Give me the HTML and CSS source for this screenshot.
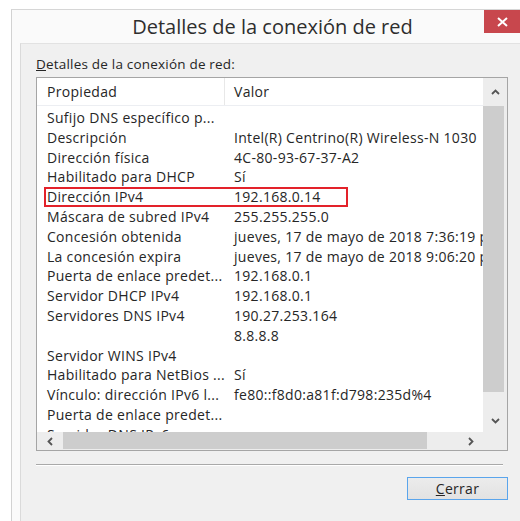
FILE: index.html
```html
<!DOCTYPE html>
<html lang="es">
<head>
<meta charset="utf-8">
<title>Detalles de la conexión de red</title>
<link rel="stylesheet" href="styles.css">
</head>
<body>
<div class="window">
  <div class="titlebar">
    <span class="title">Detalles de la conexión de red</span>
    <div class="close" aria-label="Cerrar">
      <svg width="11" height="10" viewBox="0 0 11 10"><path d="M1 1 L10 9 M10 1 L1 9" stroke="#fff" stroke-width="2" fill="none"/></svg>
    </div>
  </div>
  <div class="client">
    <div class="group-label"><u>D</u>etalles de la conexión de red:</div>
    <div class="listview">
      <div class="list-area">
        <div class="header">
          <div class="c1 hcol">Propiedad</div>
          <div class="c2 hcol">Valor</div>
        </div>
        <div class="rows">
          <div class="row"><span class="c1">Sufijo DNS específico p...</span><span class="c2"></span></div>
          <div class="row"><span class="c1">Descripción</span><span class="c2">Intel(R) Centrino(R) Wireless-N 1030</span></div>
          <div class="row"><span class="c1">Dirección física</span><span class="c2">4C-80-93-67-37-A2</span></div>
          <div class="row"><span class="c1">Habilitado para DHCP</span><span class="c2">Sí</span></div>
          <div class="row marked"><span class="c1">Dirección IPv4</span><span class="c2">192.168.0.14</span></div>
          <div class="row"><span class="c1">Máscara de subred IPv4</span><span class="c2">255.255.255.0</span></div>
          <div class="row"><span class="c1">Concesión obtenida</span><span class="c2">jueves, 17 de mayo de 2018 7:36:19 p. m.</span></div>
          <div class="row"><span class="c1">La concesión expira</span><span class="c2">jueves, 17 de mayo de 2018 9:06:20 p. m.</span></div>
          <div class="row"><span class="c1">Puerta de enlace predet...</span><span class="c2">192.168.0.1</span></div>
          <div class="row"><span class="c1">Servidor DHCP IPv4</span><span class="c2">192.168.0.1</span></div>
          <div class="row"><span class="c1">Servidores DNS IPv4</span><span class="c2">190.27.253.164</span></div>
          <div class="row"><span class="c1"></span><span class="c2">8.8.8.8</span></div>
          <div class="row"><span class="c1">Servidor WINS IPv4</span><span class="c2"></span></div>
          <div class="row"><span class="c1">Habilitado para NetBios ...</span><span class="c2">Sí</span></div>
          <div class="row"><span class="c1">Vínculo: dirección IPv6 l...</span><span class="c2">fe80::f8d0:a81f:d798:235d%4</span></div>
          <div class="row"><span class="c1">Puerta de enlace predet...</span><span class="c2"></span></div>
          <div class="row"><span class="c1">Servidor DNS IPv6</span><span class="c2"></span></div>
        </div>
      </div>
      <div class="vscroll">
        <div class="sb-btn up">
          <svg width="9" height="6" viewBox="0 0 9 6"><path d="M1 5 L4.5 1.5 L8 5" stroke="#555" stroke-width="1.8" fill="none"/></svg>
        </div>
        <div class="vthumb"></div>
        <div class="sb-space"></div>
        <div class="sb-btn down">
          <svg width="9" height="6" viewBox="0 0 9 6"><path d="M1 1 L4.5 4.5 L8 1" stroke="#555" stroke-width="1.8" fill="none"/></svg>
        </div>
      </div>
      <div class="hscroll">
        <div class="sb-btn left">
          <svg width="6" height="9" viewBox="0 0 6 9"><path d="M5 1 L1.5 4.5 L5 8" stroke="#555" stroke-width="1.8" fill="none"/></svg>
        </div>
        <div class="hthumb"></div>
        <div class="sb-space"></div>
        <div class="sb-btn right">
          <svg width="6" height="9" viewBox="0 0 6 9"><path d="M1 1 L4.5 4.5 L1 8" stroke="#555" stroke-width="1.8" fill="none"/></svg>
        </div>
      </div>
      <div class="corner"></div>
    </div>
    <div class="separator"></div>
    <div class="buttons">
      <div class="btn"><u>C</u>errar</div>
    </div>
  </div>
</div>
</body>
</html>
```

FILE: styles.css
```css
html, body {
  margin: 0;
  padding: 0;
}

body {
  width: 520px;
  height: 521px;
  overflow: hidden;
  background: #ffffff;
  font-family: "Open Sans", "Noto Sans", "DejaVu Sans", sans-serif;
  color: #262626;
}

.window {
  margin: 9px 0 0 11px;
  width: 509px;
  height: 512px;
  border-left: 1px solid #d2d2d2;
  border-top: 1px solid #d6d6d6;
  background: #fafafa;
  display: flex;
  flex-direction: column;
}

/* caption */
.titlebar {
  height: 33px;
  display: grid;
  grid-template-columns: 1fr auto 1fr;
  align-items: start;
  padding-left: 12px;
}

.title {
  grid-column: 2;
  font-size: 20px;
  line-height: 34px;
  color: #2e2e2e;
  white-space: nowrap;
}

.close {
  grid-column: 3;
  justify-self: end;
  width: 37px;
  height: 23px;
  background: #c8474d;
  display: flex;
  align-items: center;
  justify-content: center;
}

/* dialog body */
.client {
  flex: 1;
  margin-left: 8px;
  border-left: 1px solid #dadada;
  border-top: 1px solid #e2e2e2;
  background: #f0f0f0;
  padding: 12px 0 0 15px;
  font-size: 14px;
  letter-spacing: 0.3px;
}

.group-label {
  line-height: 16px;
  height: 16px;
  margin-bottom: 5px;
  white-space: nowrap;
  font-size: 13.5px;
  letter-spacing: 0.2px;
}

.listview {
  width: 470px;
  height: 372px;
  border: 1px solid #a5a5a5;
  background: #ffffff;
  display: grid;
  grid-template-columns: 446px 24px;
  grid-template-rows: 354px 18px;
}

.list-area {
  overflow: hidden;
  position: relative;
}

.header {
  display: flex;
  height: 27px;
  border-bottom: 1px solid #eceef2;
}

.hcol {
  line-height: 28px;
}

.c1 {
  flex: 0 0 188px;
  width: 188px;
  box-sizing: border-box;
  padding-left: 10px;
  white-space: nowrap;
  overflow: hidden;
}

.header .c1 {
  border-right: 1px solid #e8e8e8;
}

.c2 {
  padding-left: 9px;
  white-space: nowrap;
}

.rows {
  padding-top: 2px;
}

.row {
  display: flex;
  height: 19.8px;
  line-height: 19.8px;
  position: relative;
  white-space: nowrap;
}

/* red annotation frame around the IPv4 address row */
.row.marked::after {
  content: "";
  position: absolute;
  left: 7px;
  top: 0;
  width: 304px;
  height: 100%;
  box-sizing: border-box;
  border: 2px solid #e3222a;
}

/* scrollbars */
.vscroll {
  background: #ededed;
  display: flex;
  flex-direction: column;
}

.sb-btn {
  display: flex;
  align-items: center;
  justify-content: center;
}

.vscroll .up {
  height: 27px;
  flex: 0 0 27px;
}

.vthumb {
  height: 286px;
  margin: 1px 3px 0 0;
  background: #cdcdcd;
}

.sb-space {
  flex: 1;
}

.vscroll .down {
  height: 22px;
  flex: 0 0 22px;
}

.hscroll {
  grid-column: 1;
  grid-row: 2;
  background: #ededed;
  display: flex;
}

.hscroll .left {
  width: 26px;
  flex: 0 0 26px;
}

.hthumb {
  width: 364px;
  margin-bottom: 1px;
  background: #cdcdcd;
}

.hscroll .right {
  width: 24px;
  flex: 0 0 24px;
}

.corner {
  background: #ededed;
}

.separator {
  width: 467px;
  margin-top: 13px;
  border-top: 1px solid #a9a9a9;
  border-bottom: 1px solid #ffffff;
}

.buttons {
  width: 472px;
  display: flex;
  justify-content: flex-end;
  margin-top: 11px;
}

.btn {
  width: 99px;
  height: 21px;
  line-height: 21px;
  text-align: center;
  border: 1px solid #5aa5ec;
  background: linear-gradient(#ececec, #e2e2e2);
  color: #262626;
}
```
